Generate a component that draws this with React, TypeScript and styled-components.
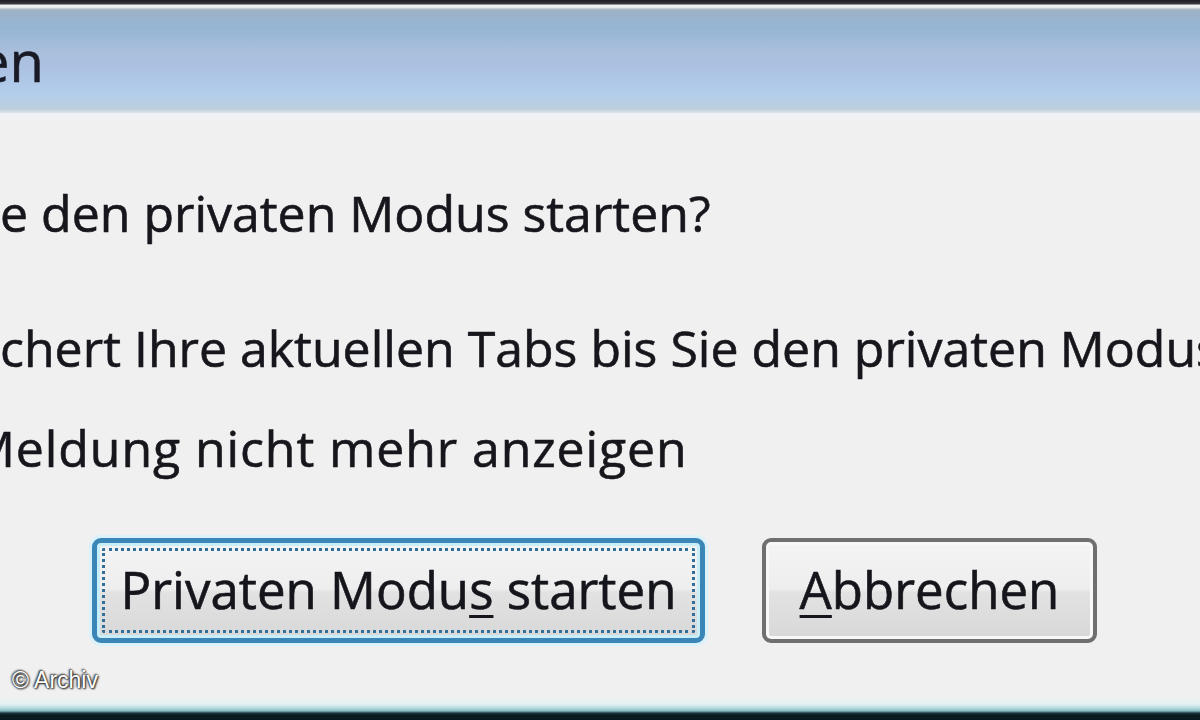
import React from "react";
import styled, { createGlobalStyle } from "styled-components";

const Global = createGlobalStyle`
  html, body { margin: 0; padding: 0; background: #f1f0f1; }
  * { box-sizing: border-box; }
`;

const Frame = styled.div`
  width: 1200px;
  height: 720px;
  overflow: hidden;
  display: flex;
  flex-direction: column;
  background: #f1f0f1;
  font-family: "Open Sans", "Noto Sans", sans-serif;
  color: #16161c;
`;

const TopEdge = styled.div`
  height: 10px;
  flex: none;
  background: linear-gradient(
    to bottom,
    #1c1c22 0px,
    #3a3b40 4px,
    #e8eeee 5px,
    #f2f6f4 7px,
    #b8c2c8 9px,
    #a0b0bc 10px
  );
`;

const TitleBar = styled.div`
  height: 103px;
  flex: none;
  display: flex;
  align-items: center;
  overflow: hidden;
  background: linear-gradient(
    to bottom,
    #9db2c6 0%,
    #96b5d4 18%,
    #a9bfdc 40%,
    #adc2e3 58%,
    #b3ceec 82%,
    #bccfdb 96%,
    #dfe4ee 100%
  );
`;

const TitleText = styled.span`
  font-size: 56px;
  line-height: 1;
  margin-left: -22px;
  margin-top: -4px;
  color: #1a1a26;
  white-space: nowrap;
  -webkit-text-stroke: 0.6px #1a1a26;
`;

const Content = styled.div`
  flex: 1;
  display: flex;
  flex-direction: column;
  overflow: hidden;
  background: linear-gradient(to bottom, #f0f1f5 0px, #f1f0f0 12px);
  position: relative;
`;

const Line = styled.div<{ $top: number; $indent?: number; $spacing?: number }>`
  font-size: 50px;
  line-height: 60px;
  white-space: nowrap;
  margin-top: ${(p) => p.$top}px;
  text-indent: ${(p) => p.$indent ?? 0}px;
  letter-spacing: ${(p) => p.$spacing ?? 0}px;
  -webkit-text-stroke: 0.6px #16161c;
`;

const ButtonRow = styled.div`
  display: flex;
  gap: 57px;
  margin-top: 60px;
  padding-left: 92px;
`;

const Button = styled.div<{ $default?: boolean; $w: number }>`
  width: ${(p) => p.$w}px;
  height: 105px;
  border-radius: 9px;
  display: flex;
  align-items: center;
  justify-content: center;
  position: relative;
  font-size: 51px;
  color: #15151c;
  -webkit-text-stroke: 0.6px #15151c;
  border: ${(p) => (p.$default ? "5px solid #3a86b6" : "4px solid #6f6f6f")};
  background: linear-gradient(
    to bottom,
    #f4f4f4 0%,
    #eeeeee 48%,
    #e2e2e2 52%,
    #d8d8d8 100%
  );
  box-shadow: ${(p) =>
    p.$default
      ? "inset 0 0 0 3px #c8eefa, 0 0 0 3px #d9f2fb"
      : "inset 0 0 0 3px #f8f8f8"};
  padding-bottom: 4px;
`;

const FocusRect = styled.div`
  position: absolute;
  inset: 5px;
  border: 3px dotted #2f6f9a;
  border-radius: 2px;
  pointer-events: none;
`;

const Mnemonic = styled.span`
  text-decoration: underline;
  text-decoration-thickness: 3px;
  text-underline-offset: 6px;
`;

const Credit = styled.div`
  position: absolute;
  left: 12px;
  bottom: 4px;
  font-family: "Liberation Sans", Arial, sans-serif;
  font-size: 23px;
  color: #ffffff;
  text-shadow: 0 0 2px #111, 1px 1px 2px #222, -1px -1px 2px #444;
`;

const BottomEdge = styled.div`
  height: 22px;
  flex: none;
  background: linear-gradient(
    to bottom,
    #f1f0f1 0px,
    #e2f1f2 6px,
    #b8dcdf 10px,
    #86b9bd 13px,
    #1d3a44 15px,
    #0a1820 17px,
    #0a1820 22px
  );
`;

export default function App() {
  return (
    <>
      <Global />
      <Frame>
        <TopEdge />
        <TitleBar>
          <TitleText>en</TitleText>
        </TitleBar>
        <Content>
          <Line $top={70}>e den privaten Modus starten?</Line>
          <Line $top={75}>chert Ihre aktuellen Tabs bis Sie den privaten Modus beenden.</Line>
          <Line $top={40} $indent={-30} $spacing={0.9}>Meldung nicht mehr anzeigen</Line>
          <ButtonRow>
            <Button $default $w={613}>
              <FocusRect />
              <span>
                Privaten Modu<Mnemonic>s</Mnemonic> starten
              </span>
            </Button>
            <Button $w={335}>
              <span>
                <Mnemonic>A</Mnemonic>bbrechen
              </span>
            </Button>
          </ButtonRow>
          <Credit>© Archiv</Credit>
        </Content>
        <BottomEdge />
      </Frame>
    </>
  );
}
